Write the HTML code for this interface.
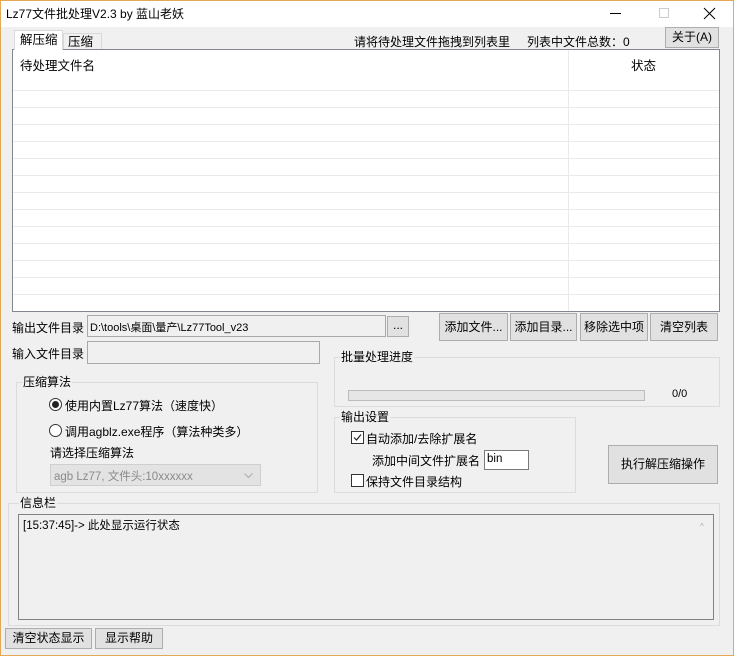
<!DOCTYPE html><html><head><meta charset="utf-8"><style>
*{box-sizing:border-box;margin:0;padding:0}
body{width:734px;height:656px;overflow:hidden;background:#f0f0f0;font-family:"Liberation Sans","Noto Sans CJK SC",sans-serif;font-size:12px;color:#000;position:relative}
.a{position:absolute;white-space:nowrap}
.win{position:absolute;left:0;top:0;width:734px;height:656px;border:1px solid #e5a956;pointer-events:none}
.btn{position:absolute;background:#e1e1e1;border:1px solid #adadad;text-align:center;font-size:12px}
.grp{position:absolute;border:1px solid #dcdcdc}
.gt{position:absolute;background:#f0f0f0;padding:0 1px;font-size:12px;line-height:14px}
.inp{position:absolute;border:1px solid #a9a9a9;background:#f0f0f0}
</style></head><body>
<div class="a" style="left:0;top:0;width:734px;height:27px;background:#fff"></div>
<div class="a" style="left:6px;top:5px;font-size:12px">Lz77文件批处理V2.3 by 蓝山老妖</div>
<div class="a" style="left:610px;top:13px;width:11px;height:1px;background:#000"></div>
<div class="a" style="left:659px;top:8px;width:10px;height:10px;border:1px solid #ccc"></div>
<svg class="a" style="left:703px;top:7px" width="13" height="13"><path d="M1 1L12 12M12 1L1 12" stroke="#000" stroke-width="1"/></svg>

<div class="a" style="left:354px;top:33px">请将待处理文件拖拽到列表里</div>
<div class="a" style="left:527px;top:33px">列表中文件总数：0</div>
<div class="btn" style="left:665px;top:27px;width:54px;height:21px;line-height:19px">关于(A)</div>

<div class="a" style="left:12px;top:49px;width:708px;height:263px;background:#fff;border:1px solid #828790"></div>
<div class="a" style="left:13px;top:74px;width:706px;height:237px;background:repeating-linear-gradient(to bottom,transparent 0,transparent 16px,#eaeaea 16px,#eaeaea 17px)"></div>
<div class="a" style="left:568px;top:50px;width:1px;height:261px;background:#eaeaea"></div>
<div class="a" style="left:20px;top:55px;font-size:12.5px">待处理文件名</div>
<div class="a" style="left:631px;top:55px;font-size:12.5px">状态</div>

<div class="a" style="left:14px;top:30px;width:49px;height:20px;background:#fff;border:1px solid #d9d9d9;border-bottom:none;padding:0 0 0 5px;font-size:12.5px;line-height:19px">解压缩</div>
<div class="a" style="left:63px;top:33px;width:39px;height:16px;background:#f0f0f0;border:1px solid #d9d9d9;border-bottom:none;padding:0 0 0 4px;font-size:12.5px;line-height:16px">压缩</div>

<div class="a" style="left:12px;top:319px">输出文件目录</div>
<div class="inp" style="left:87px;top:315px;width:299px;height:22px;background:#f0f0f0"></div>
<div class="a" style="left:90px;top:319px;font-size:11px">D:\tools\桌面\量产\Lz77Tool_v23</div>
<div class="btn" style="left:387px;top:316px;width:22px;height:21px;line-height:16px">...</div>
<div class="btn" style="left:439px;top:313px;width:69px;height:28px;line-height:26px">添加文件...</div>
<div class="btn" style="left:510px;top:313px;width:67px;height:28px;line-height:26px">添加目录...</div>
<div class="btn" style="left:580px;top:313px;width:68px;height:28px;line-height:26px">移除选中项</div>
<div class="btn" style="left:650px;top:313px;width:68px;height:28px;line-height:26px">清空列表</div>

<div class="a" style="left:12px;top:345px">输入文件目录</div>
<div class="inp" style="left:87px;top:341px;width:233px;height:23px"></div>

<div class="grp" style="left:16px;top:382px;width:302px;height:111px"></div>
<div class="gt" style="left:22px;top:375px">压缩算法</div>
<div class="a" style="left:49px;top:398px;width:13px;height:13px;border:1px solid #333;border-radius:50%;background:#fff"></div>
<div class="a" style="left:52px;top:401px;width:7px;height:7px;border-radius:50%;background:#222"></div>
<div class="a" style="left:65px;top:397px">使用内置Lz77算法（速度快）</div>
<div class="a" style="left:49px;top:424px;width:13px;height:13px;border:1px solid #333;border-radius:50%;background:#fff"></div>
<div class="a" style="left:65px;top:423px">调用agblz.exe程序（算法种类多）</div>
<div class="a" style="left:50px;top:444px">请选择压缩算法</div>
<div class="a" style="left:50px;top:464px;width:211px;height:22px;background:#e3e3e3;border:1px solid #cfcfcf"></div>
<div class="a" style="left:54px;top:468px;color:#8a8a8a;font-size:11.5px">agb Lz77, 文件头:10xxxxxx</div>
<svg class="a" style="left:244px;top:473px" width="9" height="6"><path d="M0.5 0.5L4.5 4.5L8.5 0.5" stroke="#aaa" fill="none"/></svg>

<div class="grp" style="left:334px;top:357px;width:386px;height:50px"></div>
<div class="gt" style="left:340px;top:350px">批量处理进度</div>
<div class="a" style="left:348px;top:390px;width:297px;height:11px;background:#e6e6e6;border:1px solid #bcbcbc"></div>
<div class="a" style="left:672px;top:388px;font-size:11px">0/0</div>

<div class="grp" style="left:334px;top:417px;width:242px;height:76px"></div>
<div class="gt" style="left:340px;top:410px">输出设置</div>
<div class="a" style="left:351px;top:431px;width:13px;height:13px;border:1px solid #333;background:#fff"></div>
<svg class="a" style="left:352px;top:432px" width="11" height="11"><path d="M2 5.5L4.5 8L9 2.5" stroke="#222" fill="none" stroke-width="1.2"/></svg>
<div class="a" style="left:366px;top:430px">自动添加/去除扩展名</div>
<div class="a" style="left:372px;top:452px">添加中间文件扩展名</div>
<div class="a" style="left:484px;top:450px;width:45px;height:20px;background:#fff;border:1px solid #7a7a7a"></div>
<div class="a" style="left:487px;top:453px;font-size:11.5px">bin</div>
<div class="a" style="left:351px;top:474px;width:13px;height:13px;border:1px solid #333;background:#fff"></div>
<div class="a" style="left:366px;top:473px">保持文件目录结构</div>

<div class="btn" style="left:608px;top:445px;width:110px;height:39px;line-height:37px">执行解压缩操作</div>

<div class="grp" style="left:8px;top:503px;width:712px;height:123px"></div>
<div class="gt" style="left:19px;top:496px">信息栏</div>
<div class="a" style="left:18px;top:514px;width:696px;height:106px;border:1px solid #828282;background:#f0f0f0"></div>
<div class="a" style="left:23px;top:517px;font-size:11.5px">[15:37:45]-&gt; 此处显示运行状态</div>
<div class="a" style="left:700px;top:522px;font-size:8px;color:#aaa">^</div>

<div class="btn" style="left:5px;top:628px;width:87px;height:21px;line-height:19px">清空状态显示</div>
<div class="btn" style="left:95px;top:628px;width:68px;height:21px;line-height:19px">显示帮助</div>
<div class="win"></div>
</body></html>
